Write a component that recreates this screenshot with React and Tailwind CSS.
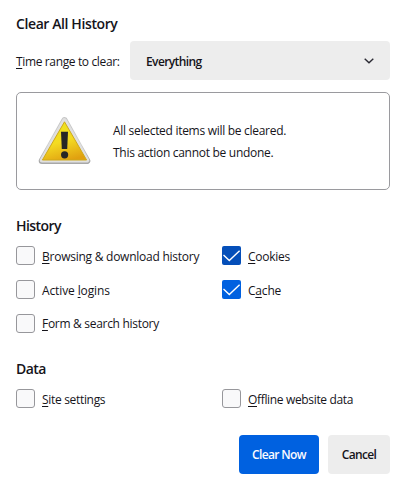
const historyItems = [
  { before: '', accessKey: 'B', after: 'rowsing & download history', text: 'pt-[3px] tracking-[-0.25px]' },
  { before: '', accessKey: 'C', after: 'ookies', checked: true, active: true, text: 'pt-[3px] tracking-[-0.25px]' },
  { before: 'Active ', accessKey: 'l', after: 'ogins', text: 'pt-[3px] tracking-[-0.12px]' },
  { before: 'C', accessKey: 'a', after: 'che', checked: true, text: 'pt-[3px] tracking-[-0.2px]' },
  { before: '', accessKey: 'F', after: 'orm & search history', text: 'pt-px tracking-[-0.3px]' },
];

const dataItems = [
  { before: '', accessKey: 'S', after: 'ite settings', text: 'pt-[3px] tracking-[-0.32px]' },
  { before: '', accessKey: 'O', after: 'ffline website data', text: 'pt-[3px] tracking-[-0.34px]' },
];

const AccessKey = ({ children }) => (
  <span className="underline decoration-1 underline-offset-2 [text-decoration-skip-ink:none]">{children}</span>
);

const WarningIcon = () => (
  <svg width="54" height="50" viewBox="0 0 54 50" fill="none">
    <defs>
      <linearGradient id="metal" x1="0" y1="0" x2="0" y2="1">
        <stop offset="0" stopColor="#c4c4c4" />
        <stop offset="0.6" stopColor="#cfcfcf" />
        <stop offset="1" stopColor="#a8a8a8" />
      </linearGradient>
      <linearGradient id="yellow" x1="0.3" y1="0" x2="0.65" y2="1">
        <stop offset="0" stopColor="#ece21c" />
        <stop offset="0.5" stopColor="#f4db22" />
        <stop offset="1" stopColor="#e0a010" />
      </linearGradient>
    </defs>
    <path d="M27.5 4.5 50 44.8H5Z" fill="url(#metal)" stroke="url(#metal)" strokeWidth="6.6" strokeLinejoin="round" />
    <path d="M27.5 4.5 50 44.3H5Z" fill="#e0e0e0" stroke="#e0e0e0" strokeWidth="4.6" strokeLinejoin="round" />
    <path d="M27.5 5.8 49.6 44H5.4Z" fill="url(#yellow)" stroke="#cfa91a" strokeWidth="1" strokeLinejoin="round" />
    <path d="M24 15.7h7l-.8 17.3h-5.4Z" fill="#262626" />
    <circle cx="27.6" cy="38.8" r="3.6" fill="#262626" />
  </svg>
);

const CheckItem = ({ item }) => (
  <label className="flex h-[19px] items-center">
    {item.checked ? (
      <span className={`flex size-[19px] shrink-0 rounded-[2px] ${item.active ? 'bg-[#054fb9]' : 'bg-[#0061e0]'}`}>
        <svg width="19" height="19" viewBox="0 0 19 19" fill="none">
          <path d="M1.5 9 7.3 14.6 17.6 4.8" stroke="#fff" strokeWidth="1.4" />
        </svg>
      </span>
    ) : (
      <span className="size-[19px] shrink-0 rounded-[3px] border border-[#97979b] bg-[#f9f9fa]" />
    )}
    <span className={`ml-[7px] leading-4 whitespace-nowrap ${item.text}`}>
      {item.before}
      <AccessKey>{item.accessKey}</AccessKey>
      {item.after}
    </span>
  </label>
);

const Heading = ({ children }) => (
  <h2 className="mt-6 h-8 text-[14px] leading-6 font-semibold tracking-[-0.55px]">{children}</h2>
);

const App = () => {
  return (
    <div className="h-[486px] w-[404px] bg-white pt-3 pr-[14px] pl-4 font-['Open_Sans','Noto_Sans',sans-serif] text-[12px] text-[#15141a]">
      <h1 className="h-[29px] text-[14px] leading-6 font-semibold tracking-[-0.4px]">Clear All History</h1>

      {/* Time range */}
      <div className="flex h-[39px] items-center justify-between">
        <span className="pt-[3px] tracking-[-0.36px] whitespace-nowrap">
          <AccessKey>T</AccessKey>ime range to clear:
        </span>
        <button className="flex h-[39px] w-[260px] items-center justify-between rounded-[4px] bg-[#ededed] pr-4 pl-4 font-semibold tracking-[-0.6px]">
          <span className="pt-[2px]">Everything</span>
          <svg width="10" height="6" viewBox="0 0 10 6" fill="none">
            <path d="M0.7 0.7 5 4.7 9.3 0.7" stroke="#2b2a33" strokeWidth="1.4" />
          </svg>
        </button>
      </div>

      {/* Warning */}
      <div className="mt-3 flex h-[98px] items-center rounded-[5px] border border-[#9a9a9e] pl-5">
        <WarningIcon />
        <p className="ml-[22px] pt-[2px] leading-[22px] tracking-[-0.29px] whitespace-nowrap">
          All selected items will be cleared.
          <br />
          This action cannot be undone.
        </p>
      </div>

      <Heading>History</Heading>
      <div className="grid grid-cols-[206px_1fr] gap-y-[15px]">
        {historyItems.map((item) => (
          <CheckItem key={item.accessKey} item={item} />
        ))}
      </div>

      <Heading>Data</Heading>
      <div className="grid grid-cols-[206px_1fr]">
        {dataItems.map((item) => (
          <CheckItem key={item.accessKey} item={item} />
        ))}
      </div>

      <div className="mt-[27px] flex justify-end gap-[9px] font-semibold tracking-[-0.65px]">
        <button className="h-[39px] w-20 rounded-[4px] bg-[#0061e0] text-[#fbfbfe]">Clear Now</button>
        <button className="h-[39px] w-[62px] rounded-[4px] bg-[#ededed]">Cancel</button>
      </div>
    </div>
  );
};

export default App;
